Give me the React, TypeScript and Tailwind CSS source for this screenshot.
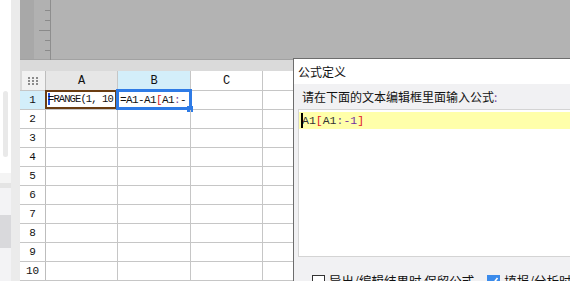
import React from 'react'

const mono = { fontFamily: '"Liberation Mono", "DejaVu Sans Mono", monospace' }
const cjk = { fontFamily: '"Noto Sans CJK SC", "Noto Sans", sans-serif' }

function Ruler() {
  return (
    <svg width="17" height="60" className="block">
      {[10, 20, 40, 50].map((y) => (
        <line key={y} x1="11" x2="17" y1={y + 0.5} y2={y + 0.5} stroke="#8a8a8a" />
      ))}
      <line x1="5" x2="17" y1="30.5" y2="30.5" stroke="#8a8a8a" />
      <line x1="16.5" x2="16.5" y1="0" y2="60" stroke="#8e8e8e" />
    </svg>
  )
}

function CornerDots() {
  return (
    <svg width="11" height="8">
      {[0, 4, 8].map((x) =>
        [0, 3, 6].map((y) => <rect key={`${x}-${y}`} x={x} y={y} width="2" height="2" fill="#8c8c8c" />)
      )}
    </svg>
  )
}

function Row({ n }: { n: number }) {
  const first = n === 1
  return (
    <div className="flex h-[19px] border-b border-[#c6c6c6]">
      <div
        className={`w-[26px] shrink-0 border-r border-[#bdbdbd] flex items-center justify-center text-[11px] text-[#111] ${first ? 'bg-[#d3eefa]' : 'bg-white'}`}
        style={mono}
      >
        {n}
      </div>
      <div className="relative w-[72px] shrink-0 border-r border-[#c6c6c6]">
        {first && (
          <>
            <div className="absolute -left-[1px] -top-[1px] right-0 bottom-0 border-2 border-[#6a3d12]" />
            <div className="absolute left-[2px] top-[2px] w-[2px] h-[12px] bg-[#2050e0]" />
            <div className="absolute left-[2px] top-0 bottom-0 flex items-center text-[10.5px] tracking-[-0.9px] text-[#111] whitespace-nowrap" style={mono}>
              =RANGE(1, 10
            </div>
          </>
        )}
      </div>
      <div className="relative w-[73px] shrink-0 border-r border-[#c6c6c6]">
        {first && (
          <>
            <div className="absolute left-[2px] top-0 bottom-0 flex items-center text-[11px] tracking-[-0.6px] text-[#111] whitespace-nowrap" style={mono}>
              =A1-A1<span className="text-[#e0202a]">[</span>A1<span className="text-[#7a4aa0]">:</span>-
            </div>
            <div className="absolute -left-[2px] -top-[2px] -right-[2px] -bottom-[1px] border-[3px] border-[#2e7be6]" />
            <div className="absolute -right-[3px] -bottom-[3px] w-[6px] h-[6px] bg-[#2e7be6]" />
          </>
        )}
      </div>
      <div className="w-[72px] shrink-0 border-r border-[#c6c6c6]" />
      <div className="flex-1" />
    </div>
  )
}

export default function App() {
  const rows = [1, 2, 3, 4, 5, 6, 7, 8, 9, 10]
  return (
    <div className="relative w-[570px] h-[281px] overflow-hidden flex bg-white">
      {/* left panel strip */}
      <div className="w-[11px] shrink-0 flex flex-col bg-white">
        <div className="h-[91px]" />
        <div className="mx-[3px] h-[66px] rounded-[3px] bg-[#e9e9e9]" />
        <div className="h-[16px]" />
        <div className="h-[10px] bg-[#f4f4f4]" />
        <div className="h-[5px] bg-[#e4e4e4]" />
        <div className="h-[27px] bg-[#f3f3f5]" />
        <div className="h-[33px] bg-[#d9d9dc]" />
        <div className="flex-1 bg-[#f3f3f5]" />
      </div>
      <div className="w-[9px] shrink-0 bg-[#ebebeb]" />

      {/* sheet */}
      <div className="flex-1 flex flex-col">
        <div className="h-[60px] flex border-b border-[#a2a2a2]">
          <div className="w-[14px] bg-[#a8a8a8]" />
          <div className="w-[17px] bg-[#b1b1b1]">
            <Ruler />
          </div>
          <div className="flex-1 bg-[#b3b3b3]" />
        </div>
        <div className="h-[11px] bg-[#dadada]" />
        <div className="flex h-[20px] border-b border-[#c6c6c6] bg-white text-[12px] text-[#111]" style={mono}>
          <div className="w-[26px] shrink-0 pl-[2px] border-r border-[#bdbdbd] bg-[#dadada]">
            <div className="h-full bg-[#f2f2f2] flex items-center justify-center">
              <CornerDots />
            </div>
          </div>
          <div className="w-[72px] shrink-0 border-r border-[#c6c6c6] bg-[#e6e6e6] flex items-center justify-center">A</div>
          <div className="w-[73px] shrink-0 border-r border-[#c6c6c6] bg-[#d3eefa] flex items-center justify-center">B</div>
          <div className="w-[72px] shrink-0 border-r border-[#c6c6c6] flex items-center justify-center">C</div>
          <div className="flex-1" />
        </div>
        {rows.map((n) => (
          <Row key={n} n={n} />
        ))}
      </div>

      {/* formula dialog */}
      <div className="absolute left-[293px] top-[58px] w-[300px] h-[240px] border-l border-t border-[#6d6d6d] flex flex-col bg-[#f1f1f3]" style={cjk}>
        <div className="h-[25px] bg-white flex items-center pl-[4px] text-[12px] text-[#111]">公式定义</div>
        <div className="h-[25px] flex items-center pl-[8px] text-[12px] text-[#111]">
          请在下面的文本编辑框里面输入公式<span className="text-[#7a4aa0]">:</span>
        </div>
        <div className="ml-[4px] h-[148px] border border-[#d4d4d4] bg-white pt-[2px]">
          <div className="relative h-[17px] bg-[#ffffaa] flex items-center pl-[3px] text-[11.5px] text-[#333]" style={mono}>
            <div className="absolute left-[2px] top-[1px] w-[2px] h-[15px] bg-black" />
            A1<span className="text-[#e0202a]">[</span>A1<span className="text-[#6a4a8a]">:</span>
            <span className="text-[#7030a0]">-1</span>
            <span className="text-[#e0202a]">]</span>
          </div>
        </div>
        <div className="flex items-center pt-[15px] text-[12.5px] text-[#111]">
          <div className="ml-[18px] w-[13px] h-[13px] border border-[#333] bg-white" />
          <span className="ml-[4px] whitespace-nowrap">导出/编辑结果时 保留公式</span>
          <div className="ml-[13px] w-[13px] h-[13px] bg-[#3b8beb] flex items-center justify-center">
            <svg width="11" height="11" viewBox="0 0 11 11">
              <path d="M1.5 5.5 L4.5 8.5 L9.5 2" stroke="white" strokeWidth="1.6" fill="none" />
            </svg>
          </div>
          <span className="ml-[4px] whitespace-nowrap">填报/分析时</span>
        </div>
      </div>
    </div>
  )
}
